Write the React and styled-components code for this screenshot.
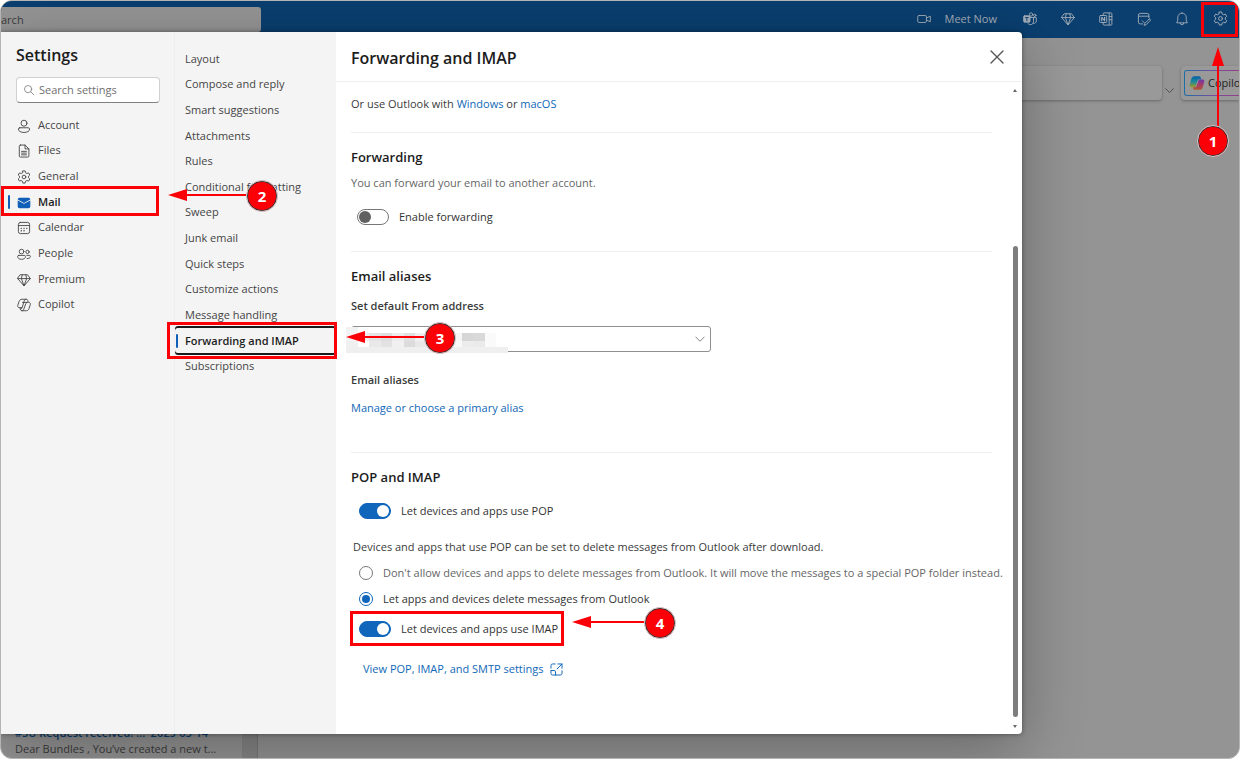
import React from "react";
import styled, { createGlobalStyle, css } from "styled-components";

const GlobalStyle = createGlobalStyle`
  *, *::before, *::after { box-sizing: border-box; }
  body { margin: 0; background: #fff; }
  body, button, input, select {
    font-family: "Open Sans", "Noto Sans", sans-serif;
    font-size: 11px;
    line-height: 16px;
    color: #3b3b3b;
  }
  h1, h2, h3, p, ul { margin: 0; padding: 0; }
  ul { list-style: none; }
  a { color: #1068b8; text-decoration: none; }
  svg { display: block; flex: none; }
`;

const RED = "#fb0007";

/* ---------- icons ---------- */

const Icon = ({ size = 14, children, ...rest }) => (
  <svg
    width={size}
    height={size}
    viewBox="0 0 20 20"
    fill="none"
    stroke="currentColor"
    strokeWidth="1.3"
    strokeLinecap="round"
    strokeLinejoin="round"
    aria-hidden="true"
    {...rest}
  >
    {children}
  </svg>
);

const SearchIcon = () => (
  <Icon size={12}>
    <circle cx="8.5" cy="8.5" r="6" />
    <path d="M13 13l5 5" />
  </Icon>
);
const PersonIcon = () => (
  <Icon>
    <circle cx="10" cy="6" r="4.3" />
    <path d="M4 12.5h12a2 2 0 0 1 2 2c0 3-3.500 4.700-8 4.700s-8-1.700-8-4.700a2 2 0 0 1 2-2z" />
  </Icon>
);
const FileIcon = () => (
  <Icon>
    <path d="M5 1.500h6.500L17 7v10a1.700 1.700 0 0 1-1.700 1.700H5A1.700 1.700 0 0 1 3.300 17V3.200A1.700 1.700 0 0 1 5 1.500z" />
    <path d="M11.500 1.500V7H17M6.500 10.500h7M6.500 13h7M6.500 15.500h7" />
  </Icon>
);
const GearIcon = ({ size }) => (
  <Icon size={size}>
    <path d="M8.400 1.300h3.200l.6 2.600 1.900 1.100 2.500-.8 1.700 2.900-1.900 1.800v2.200l1.900 1.800-1.700 2.900-2.500-.8-1.900 1.100-.6 2.600H8.400l-.6-2.600-1.900-1.100-2.500.8-1.700-2.900 1.900-1.800V8.900L1.700 7.100l1.700-2.900 2.500.8 1.900-1.100z" />
    <circle cx="10" cy="10" r="2.600" />
  </Icon>
);
const MailIcon = () => (
  <Icon stroke="none" fill="#0f5fb8">
    <path d="M1 6.300l9 4.900 9-4.900V15a2.500 2.500 0 0 1-2.500 2.500h-13A2.500 2.500 0 0 1 1 15z" />
    <path d="M3.500 2.500h13A2.500 2.500 0 0 1 19 5l-9 4.900L1 5a2.500 2.500 0 0 1 2.500-2.500z" />
  </Icon>
);
const CalendarIcon = () => (
  <Icon>
    <rect x="2" y="2" width="16" height="16" rx="3" />
    <path d="M2 6.500h16" />
    <path d="M6 10.500h.1M10 10.500h.1M14 10.500h.1M6 14h.1M10 14h.1" strokeWidth="2" />
  </Icon>
);
const PeopleIcon = () => (
  <Icon>
    <circle cx="6.500" cy="6.500" r="3.300" />
    <circle cx="15" cy="7" r="2.400" />
    <path d="M2.500 12h8a1.600 1.600 0 0 1 1.600 1.600c0 2.600-2.400 4-5.600 4s-5.600-1.400-5.600-4A1.600 1.600 0 0 1 2.500 12z" />
    <path d="M14 12h3.600a1.500 1.500 0 0 1 1.500 1.500c0 2-1.800 3.100-4.600 3" />
  </Icon>
);
const GemIcon = ({ size }) => (
  <Icon size={size}>
    <path d="M5 2.500h10l4 5.500-9 10.500L1 8z" />
    <path d="M1 8h18M7.500 2.500L6.300 8 10 18.500 13.700 8l-1.200-5.500" />
  </Icon>
);
const CopilotIcon = () => (
  <Icon>
    <path d="M8 1.800h5.300c1 0 1.800.7 2 1.600l.7 2.800h.8c1.700 0 2.700 1.600 2.200 3.200l-1.700 5.300c-.6 2.100-2 3.500-3.900 3.500H7c-1 0-1.800-.7-2-1.600l-.7-2.800h-1C1.500 13.800.6 12.200 1.100 10.600l1.700-5.300C3.400 3.200 4.900 1.800 6.700 1.800z" />
    <path d="M13 1.800c-1.300 0-2.200.8-2.600 2l-2.900 9.500c-.4 1.300-1.100 2.500-2.300 2.900M7 18.200c1.300 0 2.200-.8 2.600-2l2.900-8c.5-1.300 1.300-2 2.700-2M4.300 13.800h2.500M8 6.300h6" />
  </Icon>
);
const CameraIcon = () => (
  <Icon>
    <rect x="1" y="5" width="12.500" height="10" rx="2" />
    <path d="M13.500 8.500L19 6v8l-5.500-2.500" />
  </Icon>
);
const TeamsIcon = () => (
  <Icon>
    <rect x="1" y="5.500" width="9" height="9" rx="1" fill="currentColor" />
    <path d="M3.500 8h4M5.500 8v4.500" stroke="#0a3f70" />
    <circle cx="11.500" cy="3.600" r="2.400" />
    <circle cx="16.800" cy="4.800" r="1.700" />
    <path d="M10 8h5v6a4.500 4.500 0 0 1-8 2.500M15 8h4v5a3.200 3.200 0 0 1-4 3.200" />
  </Icon>
);
const OneNoteIcon = () => (
  <Icon>
    <path d="M6 5V2.500A1.200 1.200 0 0 1 7.200 1.300h10a1.200 1.200 0 0 1 1.200 1.200v15a1.200 1.200 0 0 1-1.200 1.200h-10A1.200 1.200 0 0 1 6 17.500V15M14.500 1.500v17M14.500 6.500h4M14.500 11h4" />
    <rect x="1" y="5" width="10" height="10" rx="1" />
    <path d="M4 12.500v-5l4 5v-5" strokeWidth="1.700" />
  </Icon>
);
const NoteIcon = () => (
  <Icon>
    <path d="M8 17H4.500A2.500 2.500 0 0 1 2 14.500v-10A2.500 2.500 0 0 1 4.500 2h10A2.500 2.500 0 0 1 17 4.500V8M2 6h15" />
    <path d="M7.500 12.500l3 3M17.500 10l-6.500 6.500-1 2.500 3-.7 6-6.300a1.400 1.400 0 0 0-1.500-2z" />
  </Icon>
);
const BellIcon = () => (
  <Icon>
    <path d="M10 1.500a6 6 0 0 0-6 6v4L2.500 15.500h15L16 11.500v-4a6 6 0 0 0-6-6zM7.500 15.800a2.500 2.500 0 0 0 5 0" />
  </Icon>
);
const CloseIcon = () => (
  <Icon size={16} strokeWidth="1.700">
    <path d="M2.500 2.500l15 15M17.500 2.500l-15 15" />
  </Icon>
);
const ChevronIcon = ({ size = 10 }) => (
  <Icon size={size} strokeWidth="1.800">
    <path d="M1.500 6l8.500 8.500L18.500 6" />
  </Icon>
);
const OpenIcon = () => (
  <Icon size={13} strokeWidth="1.500">
    <path d="M8 1.500H4A2.500 2.500 0 0 0 1.500 4v4M1.500 12v4A2.500 2.500 0 0 0 4 18.500h12a2.500 2.500 0 0 0 2.500-2.500v-4M12 1.500h6.500V8M18.500 1.500L11 9M1.500 11.500h5a2 2 0 0 1 2 2v5" />
  </Icon>
);
const CopilotLogo = () => (
  <svg width="16" height="16" viewBox="0 0 20 20" aria-hidden="true">
    <defs>
      <linearGradient id="cpa" x1="0" y1="0" x2="0" y2="1">
        <stop offset="0" stopColor="#0b5fa5" />
        <stop offset=".5" stopColor="#1a8a9c" />
        <stop offset="1" stopColor="#a89a1c" />
      </linearGradient>
      <linearGradient id="cpb" x1="0" y1="0" x2="0" y2="1">
        <stop offset="0" stopColor="#6a3aa8" />
        <stop offset=".5" stopColor="#a83a6c" />
        <stop offset="1" stopColor="#b0582c" />
      </linearGradient>
    </defs>
    <path fill="url(#cpa)" d="M6.500 1.500h6c1.400 0 2 .8 2.300 2l.6 2.200h-2.600c-1.400 0-2 .8-2.400 2L8.500 13.500c-.4 1.200-1.200 1.900-2.500 1.900H3C1.200 15.400.4 13.700 1 12L3 4.500C3.600 2.600 4.700 1.500 6.500 1.500z" />
    <path fill="url(#cpb)" d="M13.500 18.500h-6c-1.400 0-2-.8-2.300-2l-.3-1.100H7c1.400 0 2.200-.8 2.600-2l2-6c.4-1.200 1.100-1.900 2.400-1.900h3c1.800 0 2.600 1.700 2 3.400l-2 6.600c-.6 1.900-1.700 3-3.500 3z" />
  </svg>
);

/* ---------- callouts ---------- */

const Highlight = styled.span`
  position: absolute;
  inset: ${(p) => p.$inset};
  border: 3px solid ${RED};
  pointer-events: none;
  z-index: 2;
`;

const CalloutBox = styled.span`
  position: absolute;
  z-index: 3;
  display: flex;
  align-items: center;
  pointer-events: none;
  ${(p) =>
    p.$up
      ? css`
          flex-direction: column;
          top: 46px;
          right: 10px;
        `
      : css`
          bottom: ${p.$bottom};
          left: ${p.$left};
        `}
`;

const Badge = styled.b`
  display: grid;
  place-items: center;
  flex: none;
  width: 32px;
  height: 32px;
  border: 1px solid #c9cfd0;
  border-radius: 50%;
  background: ${RED};
  box-shadow: inset 0 0 0 1px #2b3638;
  color: #fff;
  font-size: 15px;
`;

const Callout = ({ n, left, bottom, length = 78 }) => (
  <CalloutBox $left={left} $bottom={bottom}>
    <svg width={length} height="16" viewBox={`0 0 ${length} 16`}>
      <path d="M0 7L19 1v12z" fill={RED} />
      <path d={`M17 7H${length}`} stroke={RED} strokeWidth="2" />
    </svg>
    <Badge>{n}</Badge>
  </CalloutBox>
);

const CalloutUp = ({ n }) => (
  <CalloutBox $up>
    <svg width="14" height="78" viewBox="-7 0 14 78" overflow="visible">
      <path d="M5 0L-1 19h12z" fill={RED} />
      <path d="M5 17V80" stroke={RED} strokeWidth="2" />
    </svg>
    <Badge>{n}</Badge>
  </CalloutBox>
);

/* ---------- mail app behind the dialog ---------- */

const Frame = styled.div`
  display: grid;
  grid-template: minmax(0, 1fr) / minmax(0, 1fr);
  min-height: 100vh;
  border: 1px solid #b4b4b4;
  border-radius: 12px;
  overflow: hidden;
  background: #949494;
  > * {
    grid-area: 1 / 1;
  }
`;

const MailApp = styled.div`
  display: flex;
  flex-direction: column;
`;

const TopBar = styled.header`
  display: flex;
  align-items: flex-end;
  justify-content: space-between;
  height: 37px;
  background: #0a3f70;
  color: #a3adb8;
`;

const TopSearch = styled.input`
  width: 260px;
  height: 25px;
  margin-bottom: 6px;
  padding: 0;
  border: 0;
  border-radius: 0 3px 3px 0;
  background: #959595;
  &::placeholder {
    color: #3b3b3b;
    opacity: 1;
  }
`;

const TopActions = styled.div`
  display: flex;
  align-items: center;
`;

const TopButton = styled.button`
  position: relative;
  display: flex;
  align-items: center;
  justify-content: center;
  gap: 14px;
  min-width: 38px;
  height: 37px;
  padding: 0 0 2px;
  border: 0;
  background: none;
  color: #a3adb8;
`;

const MeetButton = styled(TopButton)`
  margin-right: 14px;
`;

const Ribbon = styled.div`
  display: flex;
  align-items: center;
  justify-content: flex-end;
  gap: 3px;
  padding-top: 28px;
`;

const RibbonPanel = styled.div`
  flex: 1;
  height: 34px;
  border-radius: 4px;
  background: #999;
  box-shadow: 0 1px 3px rgba(0, 0, 0, 0.3);
`;

const RibbonToggle = styled.button`
  padding: 14px 0 0;
  border: 0;
  background: none;
  color: #3f3f3f;
`;

const CopilotPanel = styled.div`
  display: flex;
  justify-content: flex-start;
  width: 58px;
  height: 34px;
  padding: 4px 0 4px 3px;
  margin-left: 4px;
  overflow: hidden;
  border-radius: 4px 0 0 4px;
  background: #999;
  box-shadow: 0 1px 3px rgba(0, 0, 0, 0.3);
`;

const CopilotButton = styled.button`
  display: flex;
  align-items: center;
  gap: 3px;
  flex: none;
  height: 26px;
  padding: 0 8px 0 4px;
  border: 1px solid transparent;
  border-radius: 3px;
  background: linear-gradient(#999, #999) padding-box,
    linear-gradient(90deg, #1b6fa8, #7b4a9c 45%, #a23a78) border-box;
  color: #222;
`;

const MessageList = styled.section`
  display: flex;
  flex: 1;
  width: 257px;
  border-right: 1px solid #777;
`;

const Messages = styled.div`
  display: flex;
  flex-direction: column;
  justify-content: flex-end;
  flex: 1;
  min-width: 0;
  padding: 0 34px 1px 14px;
  border-right: 1px solid #858585;
  white-space: nowrap;
`;

const MessageSubject = styled.p`
  display: flex;
  justify-content: space-between;
  color: #0a3f70;
  font-weight: 600;
`;

const ListScroll = styled.div`
  width: 14px;
  background: #868686;
`;

/* ---------- settings dialog ---------- */

const Overlay = styled.div`
  display: flex;
  padding: 31px 217px 24px 0;
`;

const Dialog = styled.section`
  position: relative;
  display: flex;
  flex: 1;
  min-width: 0;
  border-radius: 0 4px 4px 0;
  background: #fff;
  box-shadow: 0 16px 64px rgba(0, 0, 0, 0.3), 0 0 5px rgba(0, 0, 0, 0.4);
`;

const Sidebar = styled.nav`
  width: 174px;
  flex: none;
  padding-top: 11px;
  border-right: 1px solid #eee;
  background: #f4f4f4;
`;

const SidebarTitle = styled.h1`
  padding-left: 15px;
  font-size: 16px;
  line-height: 24px;
  font-weight: 600;
  color: #1c1c1c;
`;

const SearchBox = styled.label`
  display: flex;
  align-items: center;
  gap: 4px;
  height: 26px;
  margin: 10px 14px 9px 15px;
  padding-left: 6px;
  border: 1px solid #d1d1d1;
  border-bottom-color: #808080;
  border-radius: 4px;
  background: #fff;
  color: #777;
`;

const SearchInput = styled.input`
  flex: 1;
  min-width: 0;
  padding: 0;
  border: 0;
  outline: 0;
  background: none;
  &::placeholder {
    color: #707070;
    opacity: 1;
  }
`;

const NavList = styled.ul`
  display: grid;
  grid-auto-rows: 1fr;
  height: ${(p) => p.$height};
`;

const NavItem = styled.li`
  position: relative;
  display: flex;
`;

const navSelected = css`
  color: #1c1c1c;
  font-weight: 600;
  &::before {
    content: "";
    position: absolute;
    left: ${(p) => p.$bar};
    top: 50%;
    width: 2px;
    height: 14px;
    border-radius: 1px;
    background: #0f5fb8;
    transform: translateY(-50%);
  }
`;

const CategoryButton = styled.button`
  display: flex;
  align-items: center;
  gap: 7px;
  flex: 1;
  padding: 0 0 0 16px;
  border: 0;
  background: none;
  color: #454545;
  > svg {
    margin-top: 2px;
  }
  ${(p) => p.$selected && navSelected}
`;

const SubNav = styled.nav`
  width: 161px;
  flex: none;
  padding-top: 14px;
  background: #f4f4f4;
`;

const SubButton = styled.button`
  flex: 1;
  padding: 0 0 0 10px;
  border: 0;
  border-radius: 3px;
  background: none;
  color: #454545;
  text-align: left;
  white-space: nowrap;
  ${(p) => p.$selected && navSelected}
  ${(p) =>
    p.$selected &&
    css`
      box-shadow: 0 -2px 0 #1a1a1a, 0 2px 0 #1a1a1a;
    `}
`;

const Panel = styled.div`
  display: flex;
  flex-direction: column;
  flex: 1;
  min-width: 0;
`;

const PanelHeader = styled.header`
  display: flex;
  align-items: center;
  justify-content: space-between;
  height: 50px;
  padding: 0 17px 0 15px;
  border-bottom: 1px solid #efefef;
`;

const PanelTitle = styled.h2`
  padding-top: 2px;
  font-size: 16px;
  line-height: 24px;
  font-weight: 600;
  color: #1c1c1c;
`;

const CloseButton = styled.button`
  padding: 0;
  border: 0;
  background: none;
  color: #555;
`;

const PanelBody = styled.div`
  display: flex;
  flex: 1;
`;

const Sections = styled.div`
  flex: 1;
  min-width: 0;
  padding: 0 16px 0 15px;
`;

const Section = styled.section`
  display: flex;
  flex-direction: column;
  align-items: flex-start;
  padding: 14px 0 ${(p) => p.$bottom};
  border-bottom: ${(p) => (p.$last ? "0" : "1px solid #efefef")};
`;

const SectionTitle = styled.h3`
  font-size: 13px;
  line-height: 20px;
  font-weight: 600;
  color: #1c1c1c;
`;

const Text = styled.p`
  margin-top: ${(p) => p.$top || "0"};
  padding-left: ${(p) => p.$indent || "0"};
  color: ${(p) => (p.$muted ? "#666" : "#3b3b3b")};
  font-weight: ${(p) => (p.$strong ? 600 : 400)};
`;

const ControlRow = styled.label`
  position: relative;
  display: flex;
  align-items: center;
  gap: 10px;
  margin-top: ${(p) => p.$top};
  margin-left: ${(p) => p.$indent || "8px"};
  color: ${(p) => (p.$muted ? "#666" : "#333")};
  white-space: nowrap;
`;

const Toggle = styled.input.attrs({ type: "checkbox", role: "switch" })`
  appearance: none;
  display: flex;
  align-items: center;
  flex: none;
  width: 32px;
  height: 16px;
  margin: 0;
  padding: 0 1px;
  border: 1px solid #777;
  border-radius: 8px;
  background: #fff;
  &::before {
    content: "";
    width: 12px;
    height: 12px;
    border-radius: 50%;
    background: #616161;
  }
  &:checked {
    justify-content: flex-end;
    border-color: #0f66ba;
    background: #0f66ba;
  }
  &:checked::before {
    background: #fff;
  }
`;

const Radio = styled.input.attrs({ type: "radio" })`
  appearance: none;
  display: grid;
  place-items: center;
  flex: none;
  width: 14px;
  height: 14px;
  margin: 0;
  border: 1px solid #777;
  border-radius: 50%;
  background: #fff;
  &:checked {
    border-color: #0f66ba;
  }
  &:checked::before {
    content: "";
    width: 8px;
    height: 8px;
    border-radius: 50%;
    background: #0f66ba;
  }
`;

const SelectBox = styled.div`
  position: relative;
  display: flex;
  align-items: center;
  width: 360px;
  max-width: 100%;
  margin-top: 12px;
  color: #777;
  > svg {
    position: absolute;
    right: 6px;
    pointer-events: none;
  }
`;

const Select = styled.select`
  appearance: none;
  width: 100%;
  height: 26px;
  border: 1px solid #8f8f8f;
  border-radius: 3px;
  background: #fff;
`;

const Mosaic = styled.span`
  position: absolute;
  left: -5px;
  top: 1px;
  display: grid;
  grid-template: 6px 8px 6px 6px / repeat(14, 1fr);
  width: 162px;
  background: #fff;
`;

const Tile = styled.i`
  background: ${(p) => p.$tone};
`;

const ExternalLink = styled.a`
  display: flex;
  align-items: center;
  gap: 6px;
  margin: 24px 0 0 12px;
`;

const ScrollBar = styled.div`
  display: flex;
  flex-direction: column;
  align-items: center;
  width: 14px;
  padding: 7px 0 6px;
`;

const ScrollArrow = styled.span`
  width: 0;
  height: 0;
  border: 2px solid transparent;
  border-top: ${(p) => (p.$down ? "3px solid #666" : "0")};
  border-bottom: ${(p) => (p.$down ? "0" : "3px solid #666")};
`;

const ScrollTrack = styled.div`
  display: flex;
  flex-direction: column;
  flex: 1;
  width: 5px;
  margin: 3px 0 8px;
  &::before {
    content: "";
    flex: 151;
  }
  &::after {
    content: "";
    flex: 471;
    border-radius: 3px;
    background: #7d7d7d;
  }
`;

const categories = [
  ["Account", PersonIcon],
  ["Files", FileIcon],
  ["General", GearIcon],
  ["Mail", MailIcon],
  ["Calendar", CalendarIcon],
  ["People", PeopleIcon],
  ["Premium", GemIcon],
  ["Copilot", CopilotIcon],
];

const mailPages = [
  "Layout",
  "Compose and reply",
  "Smart suggestions",
  "Attachments",
  "Rules",
  "Conditional formatting",
  "Sweep",
  "Junk email",
  "Quick steps",
  "Customize actions",
  "Message handling",
  "Forwarding and IMAP",
  "Subscriptions",
];

const topIcons = [
  ["Teams", TeamsIcon],
  ["Premium", GemIcon],
  ["OneNote", OneNoteIcon],
  ["My Day", NoteIcon],
  ["Notifications", BellIcon],
];

const tiles = [
  "#f2f2f2 #fff #fff #fff #fff #fff #fff #fff #fff #fff #fff #fff #fff #fff",
  "#f4f4f4 #efefef #e4e4e4 #dedede #ececec #e0e0e0 #f0f0f0 #e4e4e4 #f2f2f2 #f6f6f6 #d6d6d6 #d9d9d9 #fafafa #fff",
  "#f0f0f0 #fff #e9e9e9 #e2e2e2 #f0f0f0 #dcdcdc #e8e8e8 #eee #f6f6f6 #f8f8f8 #ececec #eaeaea #fafafa #fff",
  "#efefef #efefef #efefef #efefef #efefef #efefef #efefef #efefef #efefef #efefef #efefef #efefef #efefef #efefef",
].flatMap((row) => row.split(" "));

export default function App() {
  return (
    <>
      <GlobalStyle />
      <Frame>
        <MailApp>
          <TopBar>
            <TopSearch placeholder="arch" aria-label="Search mail" />
            <TopActions>
              <MeetButton>
                <CameraIcon />
                Meet Now
              </MeetButton>
              {topIcons.map(([label, Glyph]) => (
                <TopButton key={label} aria-label={label}>
                  <Glyph />
                </TopButton>
              ))}
              <TopButton aria-label="Settings">
                <GearIcon size={15} />
                <Highlight $inset="1px 1px 1px 0" />
                <CalloutUp n="1" />
              </TopButton>
            </TopActions>
          </TopBar>
          <Ribbon>
            <RibbonPanel />
            <RibbonToggle aria-label="Ribbon options">
              <ChevronIcon size={9} />
            </RibbonToggle>
            <CopilotPanel>
              <CopilotButton>
                <CopilotLogo />
                Copilot
              </CopilotButton>
            </CopilotPanel>
          </Ribbon>
          <MessageList>
            <Messages>
              <MessageSubject>
                <span>#SU Request received! ...</span>
                <span>2025-05-14</span>
              </MessageSubject>
              <p>Dear Bundles , You’ve created a new t...</p>
            </Messages>
            <ListScroll />
          </MessageList>
        </MailApp>

        <Overlay>
          <Dialog role="dialog" aria-label="Settings">
            <Sidebar aria-label="Settings categories">
              <SidebarTitle>Settings</SidebarTitle>
              <SearchBox>
                <SearchIcon />
                <SearchInput placeholder="Search settings" aria-label="Search settings" />
              </SearchBox>
              <NavList $height="205px">
                {categories.map(([label, Glyph]) => (
                  <NavItem key={label}>
                    <CategoryButton $selected={label === "Mail"} $bar="7px">
                      <Glyph />
                      {label}
                    </CategoryButton>
                    {label === "Mail" && (
                      <>
                        <Highlight $inset="-3px 15px -1px 0" />
                        <Callout n="2" left="167px" bottom="3px" />
                      </>
                    )}
                  </NavItem>
                ))}
              </NavList>
            </Sidebar>

            <SubNav aria-label="Mail settings">
              <NavList $height="333px">
                {mailPages.map((label) => (
                  <NavItem key={label}>
                    <SubButton $selected={label === "Forwarding and IMAP"} $bar="1px">
                      {label}
                    </SubButton>
                    {label === "Forwarding and IMAP" && (
                      <>
                        <Highlight $inset="-6px -1px -6px -8px" />
                        <Callout n="3" left="171px" bottom="-1px" />
                      </>
                    )}
                  </NavItem>
                ))}
              </NavList>
            </SubNav>

            <Panel>
              <PanelHeader>
                <PanelTitle>Forwarding and IMAP</PanelTitle>
                <CloseButton aria-label="Close">
                  <CloseIcon />
                </CloseButton>
              </PanelHeader>
              <PanelBody>
                <Sections>
                  <Section $bottom="20px">
                    <Text>
                      Or use Outlook with <a href="#windows">Windows</a> or <a href="#macos">macOS</a>
                    </Text>
                  </Section>

                  <Section $bottom="26px">
                    <SectionTitle>Forwarding</SectionTitle>
                    <Text $top="8px" $muted>
                      You can forward your email to another account.
                    </Text>
                    <ControlRow $top="18px" $indent="6px">
                      <Toggle />
                      Enable forwarding
                    </ControlRow>
                  </Section>

                  <Section $bottom="36px">
                    <SectionTitle>Email aliases</SectionTitle>
                    <Text as="label" htmlFor="from" $top="12px" $strong>
                      Set default From address
                    </Text>
                    <SelectBox>
                      <Select id="from">
                        <option></option>
                      </Select>
                      <ChevronIcon />
                      <Mosaic>
                        {tiles.map((tone, i) => (
                          <Tile key={i} $tone={tone} />
                        ))}
                      </Mosaic>
                    </SelectBox>
                    <Text $top="20px" $strong>
                      Email aliases
                    </Text>
                    <Text $top="12px">
                      <a href="#alias">Manage or choose a primary alias</a>
                    </Text>
                  </Section>

                  <Section $bottom="0" $last>
                    <SectionTitle>POP and IMAP</SectionTitle>
                    <ControlRow $top="16px">
                      <Toggle defaultChecked />
                      Let devices and apps use POP
                    </ControlRow>
                    <Text $top="20px" $indent="2px">
                      Devices and apps that use POP can be set to delete messages from Outlook after download.
                    </Text>
                    <ControlRow $top="10px" $muted>
                      <Radio name="pop" />
                      Don't allow devices and apps to delete messages from Outlook. It will move the messages to a special POP folder instead.
                    </ControlRow>
                    <ControlRow $top="10px">
                      <Radio name="pop" defaultChecked />
                      Let apps and devices delete messages from Outlook
                    </ControlRow>
                    <ControlRow $top="14px">
                      <Toggle defaultChecked />
                      Let devices and apps use IMAP
                      <Highlight $inset="-10px -6px -9px -9px" />
                      <Callout n="4" left="calc(100% + 14px)" bottom="-2px" length={72} />
                    </ControlRow>
                    <ExternalLink href="#servers">
                      View POP, IMAP, and SMTP settings
                      <OpenIcon />
                    </ExternalLink>
                  </Section>
                </Sections>
                <ScrollBar>
                  <ScrollArrow />
                  <ScrollTrack />
                  <ScrollArrow $down />
                </ScrollBar>
              </PanelBody>
            </Panel>
          </Dialog>
        </Overlay>
      </Frame>
    </>
  );
}
